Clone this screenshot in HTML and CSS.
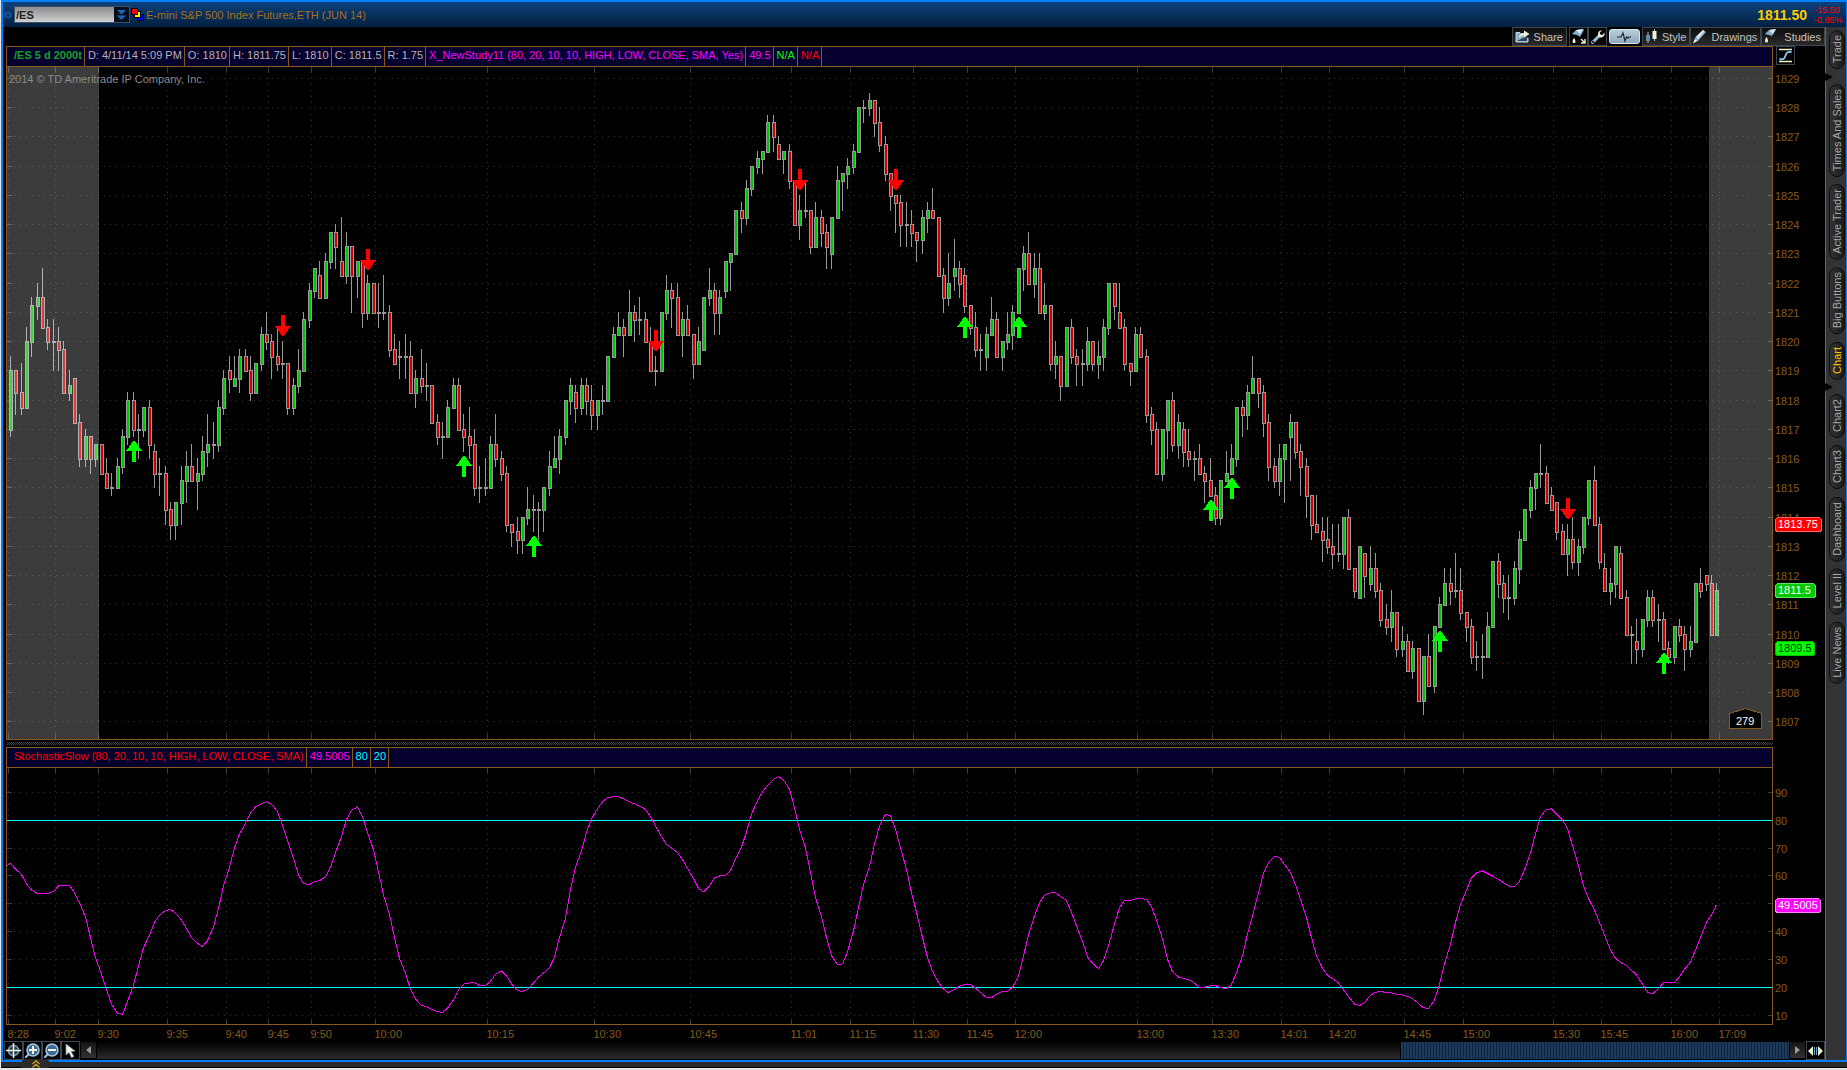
FILE: index.html
```html
<!DOCTYPE html>
<html lang="en">
<head>
  <meta charset="UTF-8">
  <meta name="viewport" content="width=device-width, initial-scale=1.0">
  <title>/ES Chart</title>
  <link rel="stylesheet" href="styles.css">
</head>
<body>
  <div class="app">
    <header class="title-bar">
      <svg class="link-dot" width="8" height="8" viewBox="0 0 8 8"><circle cx="4" cy="4" r="2.5" fill="none" stroke="#1259ad" stroke-width="1.6"/></svg>
      <div class="symbol-box">
        <input type="text" class="symbol-input" value="/ES" aria-label="Symbol">
        <button class="symbol-drop" aria-label="Symbol list">
          <svg width="9" height="12" viewBox="0 0 9 12"><path d="M0 1h9L4.500 5.500zM0 6.500h9L4.500 11z" fill="#1c66b8"/></svg>
        </button>
      </div>
      <svg class="link-color" width="14" height="13" viewBox="0 0 14 13">
        <rect x="6.500" y="6.500" width="6" height="6" fill="#00f" stroke="#000"/>
        <rect x="3.500" y="3.500" width="6" height="6" fill="#ff0" stroke="#000"/>
        <rect x=".500" y=".500" width="6" height="6" fill="#f00" stroke="#000"/>
      </svg>
      <h1 class="instrument">E-mini S&amp;P 500 Index Futures,ETH (JUN 14)</h1>
      <div class="quote">
        <strong class="last">1811.50</strong>
        <div class="change"><span>-15.50</span><span>-0.85%</span></div>
      </div>
    </header>

    <div class="body">
      <main class="workspace">
        <div class="toolbar">
          <button class="tool share">
            <svg width="15" height="13" viewBox="0 0 15 13"><path d="M5 2.500H1v9.500h12V8" fill="#8fb0c9" stroke="#c9d8e2"/><path d="M2 11l10-5v5z" fill="#29455e"/><path d="M4 8c0-3 2-5 5-5V.500L14.500 4 9 7.500V5.500C7 5.500 5.500 6 4 8z" fill="#eef3e0"/></svg>
            Share
          </button>
          <button class="tool icon" aria-label="Quick studies">
            <svg width="16" height="16" viewBox="0 0 16 16"><path d="M1 5l4-4 7-1 1 1-4 7-3-2z" fill="#86accb"/><path d="M5 1l7-1-3 5z" fill="#dfeaf2"/><path d="M3 9c2 3 2 5 0 5s-2-2 0-5z" fill="#f2f7df"/><path d="M10 10l4 4m0-4v4h-4" stroke="#e6ecc8" stroke-width="1.500" fill="none"/></svg>
          </button>
          <button class="tool icon" aria-label="Settings">
            <svg width="16" height="16" viewBox="0 0 16 16"><path d="M2.500 13.500l7-7" stroke="#9dbdd6" stroke-width="3" stroke-linecap="round"/><path d="M11 1.500C8 2 7.500 5 8.500 7S12 9.500 14.500 6V3.500L12.500 6 10 5.500 9.800 3.500 12 1.500z" fill="#eef3e0"/><circle cx="3" cy="13" r="1" fill="#000"/></svg>
          </button>
          <button class="tool pulse" aria-label="Chart mode">
            <svg width="18" height="12" viewBox="0 0 18 12"><path d="M2 6h4l2-4 2 8 1.500-4 1.500 1 1-1h2" fill="none" stroke="#1c2a36" stroke-width="1.200"/></svg>
          </button>
          <button class="tool style">
            <svg width="13" height="15" viewBox="0 0 13 15"><path d="M3 3v11M9.500 0v12" stroke="#a7bccb"/><path d="M1 6h4v6H1z" fill="#5e8db0"/><path d="M7.500 2h4v8h-4z" fill="#edf2d8"/></svg>
            Style
          </button>
          <button class="tool">
            <svg width="14" height="14" viewBox="0 0 14 14"><path d="M1 11l1.500-4L10 0l3 2-8 9z" fill="#8db2d0"/><path d="M3 7l7-7 1.500 1L5 9z" fill="#dbe8f1"/><path d="M0 13.500l1.500-4L4.500 11z" fill="#f1f5dc"/></svg>
            Drawings
          </button>
          <button class="tool studies">
            <svg width="13" height="15" viewBox="0 0 13 15"><path d="M1 5l4-4 7-1-4 7-3-1z" fill="#86accb"/><path d="M5 1l7-1-3 5z" fill="#dbe8f1"/><path d="M2.500 8c2 3 2 5.500 0 5.500s-2-2.500 0-5.500z" fill="#f1f5dc"/></svg>
            Studies
          </button>
        </div>

        <section class="pane pane-price">
          <div class="legend">
            <span class="study-name symbol">/ES 5 d 2000t</span>
            <span>D: 4/11/14 5:09 PM</span>
            <span>O: 1810</span>
            <span>H: 1811.75</span>
            <span>L: 1810</span>
            <span>C: 1811.5</span>
            <span>R: 1.75</span>
            <span class="magenta">X_NewStudy11 (80, 20, 10, 10, HIGH, LOW, CLOSE, SMA, Yes)</span>
            <span class="magenta">49.5</span>
            <span class="lime">N/A</span>
            <span class="red">N/A</span>
          </div>
          <div class="axis-head">
            <button class="scale-btn" aria-label="Axis settings">
              <svg width="15" height="15" viewBox="0 0 15 15"><path d="M1 1.500h13M1 13.500h13" stroke="#f3f3c8" stroke-width="1.500"/><path d="M1.500 11c5 1 5-1 6-3.500S9 3.500 13.500 4" fill="none" stroke="#8cc8ee" stroke-width="1.800"/></svg>
            </button>
          </div>
          <div class="plot"><svg id="pricePlot"></svg></div>
          <div class="axis"><svg id="priceAxis"></svg></div>
        </section>

        <div class="splitter"></div>

        <section class="pane pane-study">
          <div class="legend">
            <span class="study-name red">StochasticSlow (80, 20, 10, 10, HIGH, LOW, CLOSE, SMA)</span>
            <span class="magenta">49.5005</span>
            <span class="cyan">80</span>
            <span class="cyan">20</span>
          </div>
          <div class="axis-head"></div>
          <div class="plot"><svg id="studyPlot"></svg></div>
          <div class="axis"><svg id="studyAxis"></svg></div>
        </section>

        <div class="time-axis"><svg id="timeAxis"></svg></div>

        <div class="bottom-bar">
          <button class="nav-btn" aria-label="Crosshair">
            <svg width="15" height="15" viewBox="0 0 15 15"><circle cx="7.500" cy="7.500" r="5" fill="#22384c" stroke="#6d8ba5" stroke-width="2"/><path d="M7.500 0v15M0 7.500h15" stroke="#f1f3cf" stroke-width="1.500"/></svg>
          </button>
          <button class="nav-btn" aria-label="Zoom in">
            <svg width="15" height="15" viewBox="0 0 15 15"><path d="M0 15l4-4" stroke="#9fc0dd" stroke-width="2"/><circle cx="8" cy="7" r="6" fill="#3f6c97" stroke="#a9c8e2" stroke-width="1.500"/><path d="M8 3v8M4 7h8" stroke="#f4f6d6" stroke-width="2"/></svg>
          </button>
          <button class="nav-btn" aria-label="Zoom out">
            <svg width="15" height="15" viewBox="0 0 15 15"><path d="M0 15l4-4" stroke="#9fc0dd" stroke-width="2"/><circle cx="8" cy="7" r="6" fill="#3f6c97" stroke="#a9c8e2" stroke-width="1.500"/><path d="M4 7h8" stroke="#f4f6d6" stroke-width="2"/></svg>
          </button>
          <button class="nav-btn" aria-label="Pointer">
            <svg width="15" height="15" viewBox="0 0 15 15"><path d="M3 1l9 7-4 .500 3 5-2.500 1-2.500-5L3 12z" fill="#f1f3dc" stroke="#7c9ab3" stroke-width=".800"/></svg>
          </button>
          <button class="scroll-btn" aria-label="Scroll left"><svg width="5" height="8" viewBox="0 0 5 8"><path d="M5 0v8L0 4z" fill="#999"/></svg></button>
          <div class="track"><div class="thumb"></div></div>
          <button class="scroll-btn" aria-label="Scroll right"><svg width="5" height="8" viewBox="0 0 5 8"><path d="M0 0v8l5-4z" fill="#999"/></svg></button>
          <button class="nav-btn expand" aria-label="Fit to width">
            <svg width="15" height="12" viewBox="0 0 15 12"><path d="M5 1v10L0 6zM10 1v10l5-5z" fill="#e9f0cf"/><path d="M6.500 2v8M8.500 2v8" stroke="#6fa3cf"/></svg>
          </button>
        </div>
      </main>

      <nav class="side-tabs">
        <button class="tab">Trade</button>
        <svg class="notch" width="8" height="8" viewBox="0 0 8 8"><path d="M0 0v8l8-4z"/></svg>
        <button class="tab">Times And Sales</button>
        <button class="tab">Active Trader</button>
        <button class="tab">Big Buttons</button>
        <button class="tab active">Chart</button>
        <svg class="notch" width="8" height="8" viewBox="0 0 8 8"><path d="M0 0v8l8-4z"/></svg>
        <button class="tab">Chart2</button>
        <button class="tab">Chart3</button>
        <button class="tab">Dashboard</button>
        <button class="tab">Level II</button>
        <button class="tab">Live News</button>
      </nav>
    </div>

    <footer class="footer">
      <button class="drawer" aria-label="Expand">
        <svg width="8" height="8" viewBox="0 0 8 8"><path d="M.500 4L4 .800 7.500 4M.500 7.500L4 4.300l3.500 3.200" fill="none" stroke="#d9a520" stroke-width="1.200"/></svg>
      </button>
    </footer>
  </div>

  <script src="chart.js"></script>
</body>
</html>
```
FILE: styles.css
```css
* { box-sizing: border-box; }
body { margin: 0; background: #e8e8e8; font-family: "Liberation Sans", Arial, sans-serif; font-size: 11px; line-height: 14px; color: #b4b4b4; }
button, input { font: inherit; color: inherit; margin: 0; padding: 0; border: 0; border-radius: 0; background: none; }
button { cursor: pointer; }
svg { display: block; flex: none; }

.app { display: flex; flex-direction: column; height: 100vh; padding: 0 0 2px 1px; }

/* title bar */
.title-bar { display: flex; align-items: center; height: 27px; flex: none; background: linear-gradient(#0c417c, #03203f); border: 0 solid #0080ff; border-width: 2px 1px 0 2px; padding-left: 1px; }
.symbol-box { display: flex; width: 116px; height: 17px; margin: 0 1px 0 2px; border: 1px solid #3d5068; }
.symbol-input { flex: 1; min-width: 0; padding-left: 1px; background: linear-gradient(#8d8d8d, #cfcfcf); color: #222; font-weight: bold; outline: none; }
.symbol-drop { width: 15px; background: #06101c; display: flex; align-items: center; justify-content: center; }
.instrument { margin: 0 0 0 1px; font-size: 11px; font-weight: normal; color: #a87018; }
.quote { display: flex; align-items: center; gap: 7px; margin-left: auto; padding-right: 4px; }
.last { font-size: 14px; color: #ffcc00; }
.change { display: flex; flex-direction: column; width: 28px; font-size: 9px; line-height: 10px; color: #ff0000; }

.body { flex: 1; min-height: 0; display: flex; border: 0 solid #0080ff; border-width: 0 1px 2px 2px; background: #000; }
.workspace { flex: 1; min-width: 0; display: flex; flex-direction: column; }

/* toolbar */
.toolbar { display: flex; justify-content: flex-end; height: 19px; flex: none; }
.tool { display: flex; align-items: center; gap: 4px; height: 19px; padding: 0 3px 0 2px; border: 1px solid #3c4754; background: linear-gradient(#0d0d0d, #2a2a2a); color: #c0c0c0; }
.tool.share { margin-right: 2px; }
.tool.icon { width: 19px; padding: 0 1px; background: #000; }
.tool.pulse { width: 31px; height: 15px; margin: 2px; justify-content: center; padding: 0; border: 1px solid #d6e4ee; border-radius: 3px; background: linear-gradient(#b9cddb, #8ea9bd); }
.tool.studies { gap: 7px; }

/* chart panes */
.pane { display: grid; grid-template-columns: minmax(0, 1fr) 52px; grid-template-rows: 21px minmax(0, 1fr); min-height: 0; padding-left: 3px; }
.pane-price { flex: 5 1 0; }
.pane-study { flex: 2 1 0; }
.legend { display: flex; background: #05002e; border: 1px solid #885a1e; white-space: nowrap; overflow: hidden; }
.legend span { padding: 0 2px 0 3px; line-height: 17px; border-right: 1px solid #885a1e; }
.legend .study-name { padding-left: 7px; }
.legend .symbol { color: #18a028; font-weight: bold; }
.legend .magenta { color: #ff00ff; }
.legend .lime { color: #00ff00; }
.legend .red { color: #ff0000; }
.legend .cyan { color: #00ffff; }
.axis-head { padding-left: 3px; }
.scale-btn { width: 19px; height: 19px; display: flex; align-items: center; justify-content: center; border: 1px solid #3c4754; }
.plot { min-height: 0; border: 1px solid #885a1e; border-top: 0; overflow: hidden; }
.axis { min-height: 0; overflow: hidden; }
.plot svg, .axis svg, .time-axis svg { width: 100%; height: 100%; }
.splitter { height: 7px; flex: none; margin: 0 52px 0 4px; background: repeating-conic-gradient(#000 0 25%, #444 0 50%) 0 0 / 2px 2px content-box; padding: 2px 0; }
.time-axis { height: 16px; flex: none; padding-left: 4px; padding-right: 3px; }

.grid { stroke: #303030; stroke-dasharray: 1 5; }
.tick { stroke: #3c3c3c; }
.edge { fill: #999; }
.up { fill: #00c800; }
.down { fill: #d00000; }
.shade { fill: #fff; fill-opacity: .235; }
.buy { fill: #00ff00; }
.sell { fill: #ff0000; }
.level { stroke: #00ffff; }
.slow { fill: none; stroke: #f000f0; }
.label { fill: #885a1e; font-size: 11px; }
.copyright { fill: #8a8a8a; font-size: 11px; }
.badge-text { font-size: 11px; fill: #fff; }
.badge-text.dark { fill: #003000; }
.count { fill: #000; stroke: #885a1e; }

/* scroll row */
.bottom-bar { display: flex; height: 19px; flex: none; padding-left: 1px; }
.nav-btn { width: 19px; height: 19px; flex: none; display: flex; align-items: center; justify-content: center; border: 1px solid #3c4754; background: #000; }
.scroll-btn { width: 15px; height: 16px; flex: none; margin: 1px 1px; display: flex; align-items: center; justify-content: center; background: linear-gradient(#151515, #303030); }
.track { flex: 1; margin: 1px 0; background: linear-gradient(#000, #2c2c2c); display: flex; justify-content: flex-end; }
.thumb { width: 23%; border-left: 1px solid #000; background: repeating-linear-gradient(90deg, #1b3a5e 0 2px, #10233a 2px 3px); }

/* right hand tabs */
.side-tabs { width: 21px; flex: none; display: flex; flex-direction: column; align-items: center; gap: 7px; padding: 3px 0 0 2px; background: #333; border-left: 1px solid #666; }
.tab { width: 16px; padding: 5px 0 4px; writing-mode: vertical-rl; transform: rotate(180deg); line-height: 14px; border: 1px solid #0c0c0c; border-radius: 8px; background: linear-gradient(90deg, #1a1a1a, #333); color: #a8a8a8; white-space: nowrap; }
.tab.active { color: #ffc800; }
.notch { align-self: flex-start; margin: -3px 0 -4px -3px; fill: #000; }

.footer { height: 6px; flex: none; background: #2a2a2a; border-bottom: 1px solid #000; padding-left: 21px; }
.drawer { position: relative; top: -3px; display: flex; justify-content: center; align-items: center; width: 27px; height: 9px; border-radius: 3px 3px 0 0; background: #2a2a2a; }
```
FILE: chart.js
```js
// open, high, low, close in quarter point ticks above 1807
const BASE = 1807;
const bars = `
40 50 39 48,48 48 42 45,45 49 42 43,43 54 43 52,52 58 50 57,57 60 55 58,58 62 54 54,54 55 51 52,52 55 48 52,52 54 48 51
51 52 45 45,45 48 44 46,47 47 41 41,41 42 35 36,36 40 35 39,39 39 34 36,36 38 35 38,38 38 34 34,34 36 32 32,32 34 31 32
32 36 32 35,35 40 34 39,39 45 38 44,44 45 39 40,40 42 36 40,40 43 39 43,43 44 36 38,37 38 32 34,34 36 31 34,34 35 27 29
29 30 25 27,27 30 25 30,30 35 27 33,33 37 30 35,35 38 33 33,33 36 29 34,34 39 33 37,37 42 35 38,38 41 36 38,38 44 37 43
43 48 42 47,48 50 45 47,46 50 46 47,47 51 45 50,50 51 48 48,48 50 44 45,45 49 45 49,49 54 48 53,53 56 51 52,52 53 47 50
50 54 48 49,49 52 47 49,49 49 42 43,43 47 42 46,46 51 45 48,48 56 48 55,55 60 54 59,59 62 58 62,61 63 58 58,58 64 58 63
63 67 62 67,67 68 62 65,63 69 61 61,61 67 60 65,65 65 56 61,61 63 58 63,63 63 54 56,56 61 55 60,60 60 56 56,56 60 54 56
56 61 55 56,56 57 50 51,51 53 49 49,50 52 47 50,50 53 47 50,50 52 45 45,45 48 43 47,47 51 45 46,46 49 44 46,46 46 41 41
41 42 38 39,39 41 36 39,39 44 39 43,43 47 43 46,46 47 40 40,40 42 37 39,39 43 36 38,38 40 31 32,32 35 30 32,32 36 31 32
32 39 32 38,38 42 35 36,36 37 33 34,34 35 26 27,27 27 24 26,26 28 23 25,25 28 23 28,28 32 27 29,29 31 26 29,29 30 25 29
29 32 26 32,32 37 31 35,35 39 35 36,36 40 34 39,39 44 38 44,44 47 42 46,45 46 41 43,43 47 42 46,46 47 42 44,44 46 40 42
42 44 40 44,44 46 42 44,44 50 44 50,50 54 50 53,53 56 53 54,54 55 50 53,53 59 53 56,56 57 52 55,55 58 53 55,55 56 52 52
52 54 48 48,48 50 46 48,48 56 48 56,56 61 55 59,59 60 54 58,58 60 53 53,53 56 50 55,55 57 53 53,53 53 47 49,49 54 49 52
51 58 51 58,58 62 57 59,59 60 53 56,56 59 53 58,59 63 58 63,63 64 59 64,64 70 64 70,70 71 67 69,69 74 68 73,73 76 72 76
76 78 75 77,77 78 75 78,78 83 78 82,82 83 78 80,79 80 77 77,77 78 75 78,78 79 73 74,74 74 68 68,68 72 66 70,70 74 69 70
70 70 64 65,65 71 65 69,69 70 65 67,67 68 62 65,64 69 62 69,69 76 69 74,74 75 70 75,75 77 73 76,76 79 75 78,78 84 78 84
84 85 82 84,84 86 83 85,85 85 80 82,82 84 78 79,79 80 74 75,75 75 70 72,72 72 67 71,71 72 65 68,68 71 65 68,68 70 65 67
67 67 63 66,66 70 64 69,69 71 67 70,70 73 69 69,69 69 61 61,61 62 56 58,58 64 57 60,61 66 59 62,62 63 58 60,61 62 56 57
57 57 53 54,54 56 50 51,51 53 48 51,50 54 48 53,53 58 53 55,55 56 50 50,50 52 48 52,52 56 51 53,53 57 51 56,56 62 56 62
62 65 59 64,64 67 60 60,60 64 58 62,62 64 56 56,56 60 55 57,57 57 48 49,49 52 47 50,50 50 44 46,46 54 46 54,54 55 49 50
50 51 46 49,49 51 46 49,49 54 48 52,52 52 48 49,49 52 47 50,50 55 48 54,54 60 53 60,60 60 55 57,56 60 54 54,54 55 48 49
49 49 46 48,48 54 48 53,53 54 50 50,50 51 41 42,42 43 38 40,40 41 34 34,34 40 33 40,40 44 36 44,44 45 37 38,38 42 36 41
40 41 35 37,37 40 35 36,36 37 33 36,36 38 34 34,34 35 30 33,33 36 31 31,31 32 27 28,28 33 27 33,33 37 33 34,34 38 34 36
36 43 35 43,43 44 39 42,42 46 40 45,45 50 45 47,47 47 43 45,45 46 39 41,41 42 33 35,35 36 32 33,33 38 31 36,36 38 30 38
39 42 33 41,41 41 36 37,37 38 31 35,35 36 28 31,31 31 25 27,27 31 26 26,26 28 22 25,25 28 23 24,24 27 21 23,23 27 22 23
23 28 21 28,28 29 21 21,21 21 17 18,17 24 17 24,23 23 17 20,19 24 18 21,21 23 17 18,18 19 13 14,14 16 12 13,13 18 11 15
15 15 9 10,10 13 9 11,11 12 7 7,7 11 6 10,10 10 3 3,3 9 1 9,9 12 5 5,5 13 4 13,13 17 13 16,16 21 16 19
19 21 16 18,18 23 17 18,18 21 14 15,15 15 11 13,13 14 8 9,9 11 7 9,9 12 6 9,9 15 9 13,13 22 13 22,22 23 17 19
19 20 15 17,17 20 14 17,17 22 16 21,21 26 19 25,25 29 25 29,29 33 28 32,32 34 29 34,34 38 32 34,34 35 30 30,31 32 29 29
30 30 25 26,26 27 23 23,23 27 20 25,25 28 21 22,22 25 20 24,24 28 23 28,28 33 27 33,33 35 27 27,27 28 21 22,21 23 18 18
18 21 16 19,19 24 17 24,23 24 17 17,17 18 12 12,12 13 8 12,11 14 8 10,10 14 9 14,14 18 13 17,17 18 13 14,14 16 11 14
14 15 10 10,10 11 8 9,9 13 8 13,13 14 11 12,12 13 7 10,10 13 9 11,11 19 11 19,19 21 17 18,20 20 18 19,19 20 12 12
12 19 12 18`.trim().split(/[,\n]/).map(row => row.split(' ').map(Number));

// slow stochastic, one value per bar
const stochastic = [
  64.3, 62.3, 60.3, 57, 54.7, 53.5, 53.5, 53.5, 54.2, 56.2, 56.4, 56.4, 53.8, 50.2, 45, 37.7, 30.4, 24.5, 19.1, 13.6,
  10.5, 10, 14.6, 20.5, 27.5, 34, 38.6, 43.1, 45.7, 47.4, 47.7, 46.4, 44, 40.7, 37.7, 35.6, 34.4, 36.5, 41.6, 48.2,
  56.2, 63, 69.9, 74.8, 78.7, 82.5, 84.6, 85.8, 86.5, 85.6, 82.9, 78, 72.4, 66.2, 60.2, 57.1, 56.7, 57.7, 58.1, 59.5,
  62.9, 68.2, 74, 80.1, 83.4, 84.6, 81.1, 75.4, 69.2, 61.3, 53, 46, 37.7, 30.1, 24.7, 19.1, 15.6, 13.2, 12.9, 11.8,
  11.1, 10.7, 12.3, 15.3, 18.9, 20.9, 21.4, 21.5, 20.4, 20.4, 21.9, 24.5, 25.7, 23.9, 21, 18.6, 18.3, 19, 21.3, 23.5,
  24.9, 26.8, 30.6, 37.7, 44.7, 55, 63, 68.8, 75.4, 80.4, 83.9, 86.5, 88, 88.3, 88.3, 87.5, 86.4, 85.7, 84.9, 83.7,
  81.1, 77.7, 74, 71.1, 69.9, 68.2, 65.7, 62.5, 58.9, 55.3, 54.1, 56.2, 59.1, 59.8, 59.9, 61.7, 66, 70.2, 75.6, 82.1,
  86.8, 90, 92.4, 94.5, 95.5, 94.3, 91, 84.3, 76.6, 69.8, 61, 52, 45.2, 37.7, 31.1, 27.9, 28.2, 32.5, 40.1, 48.4,
  56.7, 63.2, 71.2, 77.8, 81.9, 81.5, 76.6, 69.8, 62.2, 53.8, 46.7, 37.7, 30.5, 25.7, 21.5, 19.1, 17.9, 19.1, 20.2, 20.8,
  20.8, 19.5, 17.9, 16.1, 16.1, 17.3, 18.3, 18.4, 19.7, 23.9, 31.1, 38.5, 45.4, 50.2, 52.9, 53.8, 53.8, 52.4, 51, 46.7,
  41.9, 36.2, 30.7, 28.4, 26.5, 29.3, 34.7, 42.5, 48.4, 51, 51, 51.6, 51.7, 51.4, 48.7, 43.9, 37.1, 29.9, 25.4, 23.5,
  22.9, 22.6, 21.3, 19.7, 19.8, 20.4, 20.4, 19.7, 19.2, 20.8, 25.1, 31.1, 38.9, 45.4, 53.8, 60.7, 64.6, 66.8, 66.5, 63.9,
  61, 56.6, 51.4, 44.9, 37.7, 31.1, 26.5, 24.1, 22.9, 21.3, 18.9, 16.5, 13.8, 13.2, 14.3, 16.9, 18, 18.3, 17.9, 17.8,
  17.2, 17.1, 16.5, 15.7, 14, 12.4, 12.2, 15.2, 20.9, 28.1, 35.3, 43.1, 49.6, 54.7, 59.1, 60.9, 61.6, 60.7, 59.8, 58.6,
  57.4, 56.2, 56, 57.9, 61.9, 68.2, 75, 81.1, 83.8, 83.9, 82.1, 79.9, 76.8, 70.8, 63.4, 56.2, 51.7, 47.5, 43.1, 38.6,
  33.2, 30.2, 28.7, 27.7, 25.9, 24.2, 20.9, 18.1, 17.4, 19.3, 21.5, 21.5, 21.5, 23.6, 26.3, 28.9, 33.2, 37.7, 43.1, 45.8,
  49.5
];

const times = [
  [0, '8:28'], [9, '9:02'], [17, '9:30'], [30, '9:35'], [41, '9:40'], [49, '9:45'], [57, '9:50'], [69, '10:00'],
  [90, '10:15'], [110, '10:30'], [128, '10:45'], [147, '11:01'], [158, '11:15'], [170, '11:30'], [180, '11:45'],
  [189, '12:00'], [212, '13:00'], [226, '13:30'], [239, '14:01'], [248, '14:20'], [262, '14:45'], [273, '15:00'],
  [290, '15:30'], [299, '15:45'], [312, '16:00'], [321, '17:09']
];

const sells = [51, 67, 121, 148, 166, 292];
const buys = [23, 85, 98, 179, 189, 225, 229, 268, 310];

const SLOTS = 331;
const sessionStart = 17;
const sessionEnd = 319;

const $ = id => document.getElementById(id);
const line = (x1, y1, x2, y2, cls) => `<line class="${cls}" x1="${x1}" y1="${y1}" x2="${x2}" y2="${y2}"/>`;
const rect = (x, y, w, h, cls) => `<rect class="${cls}" x="${x}" y="${y}" width="${w}" height="${h}"/>`;
const text = (x, y, str, cls) => `<text class="${cls}" x="${x}" y="${y}">${str}</text>`;

function barX(i, w) { return Math.round(4 + i * w / SLOTS); }
function timeX(i, w) { return Math.max(1, Math.round(i * w / SLOTS)) + 0.5; }

function gridLines(w, h, ys) {
  let out = '';
  ys.forEach(v => {
    const y = Math.round(v) + 0.5;
    out += line(1, y, w - 12, y, 'grid') + line(0, y, 5, y, 'tick') + line(w - 4, y, w, y, 'tick');
  });
  times.forEach(([i]) => {
    const x = timeX(i, w);
    out += line(x, 5, x, h, 'grid') + line(x, 0, x, 5, 'tick') + line(x, h - 5, x, h, 'tick');
  });
  return out;
}

function badge(y, w, str, fill, stroke, cls) {
  const top = Math.round(y) - 7;
  return `<rect x="2.5" y="${top + 0.5}" width="${w}" height="14" rx="3" fill="${fill}" stroke="${stroke}"/>` +
    text(5, top + 11, str, 'badge-text ' + cls);
}

function drawPrice() {
  const svg = $('pricePlot');
  const w = svg.clientWidth, h = svg.clientHeight;
  const y = t => (89.5 - t) / 91.9 * h;
  const levels = [];
  for (let p = 1807; p <= 1829; p++) levels.push(p);

  let out = gridLines(w, h, levels.map(p => y((p - BASE) * 4)));

  bars.forEach(([o, hi, lo, c], i) => {
    const x = barX(i, w);
    const top = Math.round(y(Math.max(o, c)));
    const bottom = Math.round(y(Math.min(o, c))) + 2;
    const wickTop = Math.round(y(hi)), wickBottom = Math.round(y(lo)) + 1;
    out += rect(x - 1, wickTop, 1, wickBottom - wickTop, 'edge');
    out += rect(x - 2, top, 4, bottom - top, 'edge');
    if (o !== c) out += rect(x - 1, top + 1, 2, bottom - top - 2, c > o ? 'up' : 'down');
  });

  // off-session hours
  const start = timeX(sessionStart, w), end = timeX(sessionEnd, w);
  out += rect(0, 0, start, h, 'shade') + rect(end, 0, w - end, h, 'shade');

  sells.forEach(i => {
    const x = barX(i, w), tip = Math.round(y(bars[i][1])) - 4;
    out += `<path class="sell" d="M${x} ${tip}l-8-11h6v-11h4v11h6z"/>`;
  });
  buys.forEach(i => {
    const x = barX(i, w), tip = Math.round(y(bars[i][2])) + 4;
    out += `<path class="buy" d="M${x} ${tip}l-8 11h6v11h4v-11h6z"/>`;
  });

  out += text(2, 16, '2014 © TD Ameritrade IP Company, Inc.', 'copyright');
  out += `<path class="count" d="M${w - 42.5} ${h - 10.5}v-15l16-5 16 5v15z"/>` + text(w - 36, h - 14, '279', 'badge-text');
  svg.innerHTML = out;

  out = levels.map(p => text(2, Math.round(y((p - BASE) * 4)) + 5, p, 'label')).join('');
  out += badge(y(27), 46, '1813.75', '#ff0000', '#ff6060', '');
  out += badge(y(18), 40, '1811.5', '#00c800', '#60e060', '');
  out += badge(y(10), 39, '1809.5', '#00ff00', '#00c000', 'dark');
  $('priceAxis').innerHTML = out;
}

function drawStudy() {
  const svg = $('studyPlot');
  const w = svg.clientWidth, h = svg.clientHeight;
  const y = v => (98.6 - v) / 92 * h;
  const levels = [10, 20, 30, 40, 50, 60, 70, 80, 90];

  let out = gridLines(w, h, levels.map(y));
  [80, 20].forEach(v => {
    const ly = Math.round(y(v)) + 0.5;
    out += line(0, ly, w, ly, 'level');
  });
  const points = stochastic.map((v, i) => `${barX(i, w) - 0.5},${y(v).toFixed(1)}`);
  out += `<polyline class="slow" points="0,${y(63.5).toFixed(1)} ${points.join(' ')}"/>`;
  svg.innerHTML = out;

  out = levels.filter(v => v !== 50).map(v => text(2, Math.round(y(v)) + 5, v, 'label')).join('');
  out += badge(y(49.5), 45, '49.5005', '#ff00ff', '#ff80ff', '');
  $('studyAxis').innerHTML = out;
}

function drawTimes() {
  const w = $('pricePlot').clientWidth;
  $('timeAxis').innerHTML = times.map(([i, str]) => text(timeX(i, w) - 1, 13, str, 'label')).join('');
}

function draw() {
  drawPrice();
  drawStudy();
  drawTimes();
}

document.querySelectorAll('svg[id]').forEach(el => el.setAttribute('shape-rendering', 'crispEdges'));
window.addEventListener('resize', draw);
draw();
```
